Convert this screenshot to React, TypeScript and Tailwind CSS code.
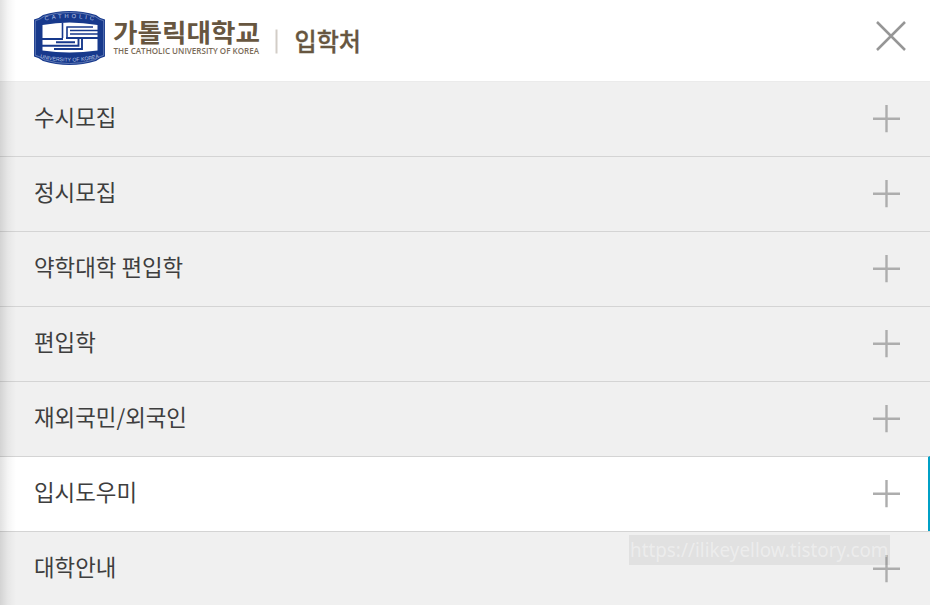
import React from "react";

const KR = "font-['Noto_Sans_CJK_KR',sans-serif]";

const items = [
  { label: "수시모집" },
  { label: "정시모집" },
  { label: "약학대학 편입학" },
  { label: "편입학" },
  { label: "재외국민/외국인" },
  { label: "입시도우미", active: true },
  { label: "대학안내" },
];

function Emblem() {
  return (
    <svg width="72" height="54" viewBox="34 11.5 72 54" className="block shrink-0">
      <path
        d="M34 20Q39 19 43 15.500Q56 11.5 69.5 11.5T96 15.500Q100 19 105 20V57Q100 58 96 61.500Q83 65.500 69.500 65.500T43 61.500Q39 58 34 57Z"
        fill="#17398c"
      />
      <path
        d="M35.300 21.200Q40 20.300 44 16.800Q56 12.900 69.500 12.900T95 16.800Q99 20.300 103.700 21.200V55.800Q99 56.700 95 60.200Q83 64.100 69.500 64.100T44 60.200Q40 56.700 35.300 55.800Z"
        fill="none"
        stroke="#8fa2d0"
        strokeWidth="0.6"
      />
      <path d="M42.500 25.500Q56 23 69.500 23T97.500 25.500V51Q83 53 69.500 53T42.500 51Z" fill="#fff" />
      <g stroke="#17398c" strokeWidth="1.600" fill="none">
        <path d="M62.500 23V38.500M67 27V38.500M66.500 27.500H93M70 31H98M70 34.500H98" />
        <path d="M42 39.500H63M66 38.500H98M56 42.800H75M42 46.300H78.500V39M82 38.500V49.500H54" strokeWidth="1.900" />
      </g>
      <defs>
        <path id="emblem-top" d="M43 21.500Q69.500 15.500 96 21.500" />
        <path id="emblem-bottom" d="M37 57.500Q69.500 66.500 102 57.500" />
      </defs>
      <g fill="#b9c5e4" className="font-['Liberation_Sans',sans-serif]">
        <text fontSize="5.800" textLength="49"><textPath href="#emblem-top" startOffset="2">CATHOLIC</textPath></text>
        <text fontSize="5.300" textLength="60"><textPath href="#emblem-bottom" startOffset="3">UNIVERSITY OF KOREA</textPath></text>
      </g>
    </svg>
  );
}

function Wordmark() {
  return (
    <svg width="256" height="54" viewBox="106 11.5 256 54" className={`block ${KR}`} fill="#675640">
      <text x="113" y="42" fontSize="25.500" fontWeight="700" textLength="147" lengthAdjust="spacingAndGlyphs">가톨릭대학교</text>
      <text x="113.500" y="54.500" fontSize="8.600" className="font-['Open_Sans',sans-serif]" fontWeight="600" fill="#7a6b58" textLength="145.500" lengthAdjust="spacingAndGlyphs">THE CATHOLIC UNIVERSITY OF KOREA</text>
      <path d="M276.500 30V54" stroke="#d2cdc7" strokeWidth="2" />
      <text x="294.500" y="51" fontSize="25" fontWeight="500" stroke="#675640" strokeWidth="0.3" textLength="66.500" lengthAdjust="spacingAndGlyphs">입학처</text>
    </svg>
  );
}

function Plus() {
  return (
    <svg width="28" height="28" viewBox="0 0 28 28" className="-mt-px block" stroke="#adadad" strokeWidth="2.400">
      <path d="M0 13.800H27M13.500 0V27.300" />
    </svg>
  );
}

export default function App() {
  return (
    <div className={`relative h-[605px] w-[930px] overflow-hidden bg-white text-[#3e3e3e] ${KR}`}>
      <header className="flex h-[81px] items-start justify-between pt-[11px] pl-[34px] pr-6">
        <div className="flex">
          <Emblem />
          <Wordmark />
        </div>
        <button aria-label="닫기" className="mt-[10px]">
          <svg width="30" height="30" viewBox="0 0 30 30" className="block" stroke="#969696" strokeWidth="2.500">
            <path d="M1 1L29 29M29 1L1 29" />
          </svg>
        </button>
      </header>
      <nav>
        {items.map((item) => (
          <a
            key={item.label}
            className={`flex h-[75px] items-center justify-between border-t pl-[34px] ${
              item.active
                ? "border-[#d4d4d4] border-r-2 border-r-[#00a0c6] bg-white pr-[27px]"
                : "border-[#d4d4d4] bg-[#f0f0f0] pr-[29px] first:border-[#ebebeb]"
            }`}
          >
            <span className="pb-[7px] text-[22.4px] leading-8">{item.label}</span>
            <Plus />
          </a>
        ))}
      </nav>
      <div className="absolute top-[535px] left-[629px] flex h-[30px] w-[261px] bg-black/6 font-['Noto_Sans',sans-serif] text-white/40">
        <svg width="261" height="30" className="block" fill="currentColor">
          <text x="1" y="21.500" fontSize="19.500" textLength="258.500" lengthAdjust="spacingAndGlyphs">https://ilikeyellow.tistory.com</text>
        </svg>
      </div>
      <div className="pointer-events-none absolute inset-y-0 left-0 w-4 bg-linear-to-r from-black/12 via-black/4 to-transparent" />
    </div>
  );
}
